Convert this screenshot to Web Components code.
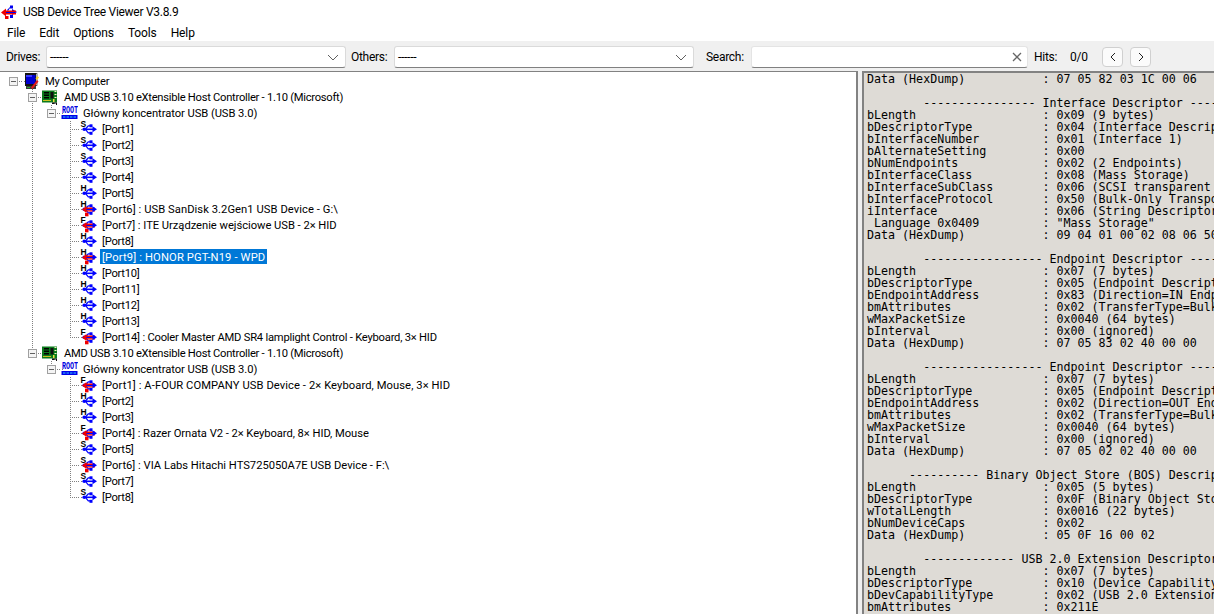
<!DOCTYPE html>
<html lang="pl">
<head>
<meta charset="utf-8">
<title>USB Device Tree Viewer</title>
<style>
  html, body { margin: 0; height: 100%; overflow: hidden; background: #fff; }
  body { font: 12px Roboto, "Noto Sans", sans-serif; color: #000; }
</style>
</head>
<body>
<usb-app></usb-app>

<script>
const UI_FONT = 'Roboto, "Noto Sans", sans-serif';

class UsbIcon extends HTMLElement {
    connectedCallback() {
        const letter = this.getAttribute('speed');
        const active = this.hasAttribute('active');
        const root = this.attachShadow({mode: 'open'});
        // blue trident, the connected ports get the red arrow on top of it
        root.innerHTML = `
            <style>:host { display: block; width: 17px; height: 16px; } svg { display: block; overflow: visible; }</style>
            <svg width="17" height="16" viewBox="0 0 17 16">
                <text x="0.500" y="5.700" font-family="Liberation Sans" font-weight="700" font-size="8.500" letter-spacing="0" fill="#000">${letter}</text>
                <g transform="translate(0 -0.700)">
                    <g fill="#0000ff">
                        <path d="M4 8.200h9v1.600H4z"/><circle cx="4.200" cy="9" r="1.800"/>
                        <path d="M5 8.300L8 5h2v1.200H8.500L6 9.300z"/><rect x="9.500" y="4" width="3" height="3"/>
                        <path d="M6 8.800l2.500 3.200h1.500v1.200H8L5 9.500z"/><rect x="9.500" y="11.500" width="3" height="3"/>
                    </g>
                    ${active ? `<g fill="#f00000">
                        <path d="M5 7.300h10v1.300H5zM5 9.900h10v1.300H5z"/><path d="M6.500 5.800L2 9.300l4.500 3.500z"/><rect x="5" y="12.500" width="3.500" height="3.500"/>
                    </g>` : ''}
                    <path d="M12.500 6l4.500 3-4.500 3z" fill="#0000ff"/>
                </g>
            </svg>`;
    }
}
customElements.define('usb-icon', UsbIcon);

class TreeIcon extends HTMLElement {
    static shapes = {
        computer: `
            <path d="M2 0h11l2 1v11l-2 1H2z" fill="#141414"/>
            <path d="M13 1h2v11h-2z" fill="#b4b4b4"/>
            <rect x="3" y="2" width="9.500" height="9" fill="#0000d0"/>
            <path d="M3 2h6v2H3z" fill="#3c3cff"/>
            <path d="M3 13h10v3H3z" fill="#3a3a3a"/><path d="M4 14h3v1H4z" fill="#2ea52e"/>
            <path d="M8 14.500l6-7.500 1.500 1.500-6 7.500z" fill="#e21818"/><path d="M12.500 5.500l2-2.500 1.500 1.500-2 2.500z" fill="#f0d020"/>`,
        controller: `
            <rect x="0" y="1.500" width="15" height="12" fill="#0b7a1c"/>
            <rect x="2" y="3" width="5" height="1.500" fill="#000"/><rect x="2" y="5.500" width="5" height="1.500" fill="#000"/><rect x="2" y="8" width="5" height="1.500" fill="#000"/>
            <rect x="8.500" y="3" width="3" height="6.500" fill="#101010"/>
            <path d="M12.500 2h2v1h-2zM12.500 5h2v1h-2zM12.500 8h2v1h-2z" fill="#f4f4c0"/>
            <rect x="11" y="10" width="1.500" height="3" fill="#e8e040"/>
            <path d="M10 13.500h5V16h-1v-1.500h-1.500V15H10z" fill="#111"/>
            <path d="M1 11h8v1H1z" fill="#c8c020"/>`,
        root: `
            <text transform="translate(1 7.500) scale(.64 1)" font-family="Liberation Mono" font-weight="700" font-size="10.500" letter-spacing="0" fill="#0000e0">ROOT</text>
            <rect x="0.500" y="10" width="16" height="4" fill="#0000e8"/>
            <path d="M2 11.500h2.500v1H2zM5.500 11.500H8v1H5.500zM9 11.500h2.500v1H9zM12.500 11.500H15v1h-2.500z" fill="#35c8ff"/>`
    };
    connectedCallback() {
        const root = this.attachShadow({mode: 'open'});
        root.innerHTML = `
            <style>:host { display: block; width: 17px; height: 16px; } svg { display: block; }</style>
            <svg width="17" height="16" viewBox="0 0 17 16">${TreeIcon.shapes[this.getAttribute('shape')]}</svg>`;
    }
}
customElements.define('tree-icon', TreeIcon);

class TreeRow extends HTMLElement {
    connectedCallback() {
        const lines = this.getAttribute('lines');
        const root = this.attachShadow({mode: 'open'});
        const cells = [...lines].map((c, i) => {
            const last = i === lines.length - 1;
            return `<span class="cell c-${{' ': 'none', '|': 'bar', 'T': 'tee', 'L': 'ell', '-': 'dash'}[c]}">${last && this.hasAttribute('box') ? '<i class="box"></i>' : ''}</span>`;
        }).join('');
        root.innerHTML = `
            <style>
                :host { display: flex; height: 16px; align-items: flex-start; white-space: nowrap; }
                .cell { flex: none; width: 19px; height: 16px; background-repeat: no-repeat; }
                .c-bar, .c-tee { background-image: repeating-linear-gradient(#808080 0 1px, transparent 1px 2px); background-size: 1px 100%; background-position: 9px 0; }
                .c-ell { background-image: repeating-linear-gradient(#808080 0 1px, transparent 1px 2px), repeating-linear-gradient(to right, #808080 0 1px, transparent 1px 2px); background-size: 1px 8px, 10px 1px; background-position: 9px 0, 9px 8px; }
                .c-tee { background-image: repeating-linear-gradient(#808080 0 1px, transparent 1px 2px), repeating-linear-gradient(to right, #808080 0 1px, transparent 1px 2px); background-size: 1px 100%, 10px 1px; background-position: 9px 0, 9px 8px; }
                .c-dash { background-image: repeating-linear-gradient(to right, #808080 0 1px, transparent 1px 2px); background-size: 10px 1px; background-position: 9px 8px; }
                .box { display: block; box-sizing: border-box; width: 9px; height: 9px; margin: 4px 0 0 5px; border: 1px solid #a0a0a0;
                       background: linear-gradient(#606060, #606060) center / 5px 1px no-repeat, #f4f4f4; }
                .icon { flex: none; width: 17px; margin-right: 5px;
                        background: repeating-linear-gradient(to right, transparent 0 1px, #808080 1px 2px) 0 8px / 3px 1px no-repeat; }
                .label { height: 16px; line-height: 18px; padding: 0 2px; margin-left: -2px; }
                :host([selected]) .label { background: #0078d7; color: #fff; height: 15px; line-height: 17px; }
            </style>
            ${cells}<span class="icon"><slot name="icon"></slot></span><span class="label"><slot></slot></span>`;
    }
}
customElements.define('tree-row', TreeRow);

class DeviceTree extends HTMLElement {
    constructor() {
        super();
        const root = this.attachShadow({mode: 'open'});
        root.innerHTML = `
            <style>
                :host { display: block; flex: none; width: 858px; box-sizing: border-box; background: #fff; padding: 1px 0 0 4px; font-size: 11.2px; letter-spacing: -0.27px;
                        border-top: 1px solid #828282; border-right: 2px solid #828282; overflow: hidden; }
            </style>
            <slot></slot>`;
    }
    connectedCallback() {
        const port = (lines, n, speed, text, track, selected) => {
            const row = document.createElement('tree-row');
            row.setAttribute('lines', lines);
            if (selected) row.setAttribute('selected', '');
            if (track !== undefined) row.style.letterSpacing = track + 'px';
            const icon = document.createElement('usb-icon');
            icon.slot = 'icon';
            icon.setAttribute('speed', speed);
            if (text) icon.setAttribute('active', '');
            row.append(icon, `[Port${n}]${text ? ' : ' + text : ''}`);
            this.append(row);
        };
        const node = (lines, shape, text, track) => {
            const row = document.createElement('tree-row');
            row.setAttribute('lines', lines);
            row.setAttribute('box', '');
            if (track !== undefined) row.style.letterSpacing = track + 'px';
            const icon = document.createElement('tree-icon');
            icon.slot = 'icon';
            icon.setAttribute('shape', shape);
            row.append(icon, text);
            this.append(row);
        };

        node('-', 'computer', 'My Computer');
        node(' T', 'controller', 'AMD USB 3.10 eXtensible Host Controller - 1.10 (Microsoft)');
        node(' |L', 'root', 'Główny koncentrator USB (USB 3.0)', -0.06);
        const hub1 = [
            ['S'], ['S'], ['S'], ['S'], ['H'],
            ['H', 'USB SanDisk 3.2Gen1 USB Device - G:\\', 0.06],
            ['F', 'ITE Urządzenie wejściowe USB - 2× HID', -0.03],
            ['H'],
            ['H', 'HONOR PGT-N19 - WPD', 0.14, true],
            ['H'], ['H'], ['H'], ['H'],
            ['F', 'Cooler Master AMD SR4 lamplight Control - Keyboard, 3× HID', -0.22]
        ];
        hub1.forEach(([speed, text, track, selected], i) => {
            port(' | ' + (i === hub1.length - 1 ? 'L' : 'T'), i + 1, speed, text, track, selected);
        });
        node(' L', 'controller', 'AMD USB 3.10 eXtensible Host Controller - 1.10 (Microsoft)');
        node('  L', 'root', 'Główny koncentrator USB (USB 3.0)', -0.06);
        const hub2 = [
            ['F', 'A-FOUR COMPANY USB Device - 2× Keyboard, Mouse, 3× HID', 0.08],
            ['H'], ['H'],
            ['F', 'Razer Ornata V2 - 2× Keyboard, 8× HID, Mouse', -0.05],
            ['S'],
            ['S', 'VIA Labs Hitachi HTS725050A7E USB Device - F:\\', 0],
            ['S'], ['S']
        ];
        hub2.forEach(([speed, text, track], i) => {
            port('   ' + (i === hub2.length - 1 ? 'L' : 'T'), i + 1, speed, text, track);
        });
    }
}
customElements.define('device-tree', DeviceTree);

class DescriptorPane extends HTMLElement {
    connectedCallback() {
        const root = this.attachShadow({mode: 'open'});
        const f = (k, v) => k.padEnd(25) + ': ' + v;
        const text = [
            f('Data (HexDump)', '07 05 82 03 1C 00 06'),
            '',
            '        ---------------- Interface Descriptor ----------------',
            f('bLength', '0x09 (9 bytes)'),
            f('bDescriptorType', '0x04 (Interface Descriptor)'),
            f('bInterfaceNumber', '0x01 (Interface 1)'),
            f('bAlternateSetting', '0x00'),
            f('bNumEndpoints', '0x02 (2 Endpoints)'),
            f('bInterfaceClass', '0x08 (Mass Storage)'),
            f('bInterfaceSubClass', '0x06 (SCSI transparent command set)'),
            f('bInterfaceProtocol', '0x50 (Bulk-Only Transport)'),
            f('iInterface', '0x06 (String Descriptor 6)'),
            f(' Language 0x0409', '"Mass Storage"'),
            f('Data (HexDump)', '09 04 01 00 02 08 06 50 06'),
            '',
            '        ----------------- Endpoint Descriptor -----------------',
            f('bLength', '0x07 (7 bytes)'),
            f('bDescriptorType', '0x05 (Endpoint Descriptor)'),
            f('bEndpointAddress', '0x83 (Direction=IN EndpointID=3)'),
            f('bmAttributes', '0x02 (TransferType=Bulk)'),
            f('wMaxPacketSize', '0x0040 (64 bytes)'),
            f('bInterval', '0x00 (ignored)'),
            f('Data (HexDump)', '07 05 83 02 40 00 00'),
            '',
            '        ----------------- Endpoint Descriptor -----------------',
            f('bLength', '0x07 (7 bytes)'),
            f('bDescriptorType', '0x05 (Endpoint Descriptor)'),
            f('bEndpointAddress', '0x02 (Direction=OUT EndpointID=2)'),
            f('bmAttributes', '0x02 (TransferType=Bulk)'),
            f('wMaxPacketSize', '0x0040 (64 bytes)'),
            f('bInterval', '0x00 (ignored)'),
            f('Data (HexDump)', '07 05 02 02 40 00 00'),
            '',
            '      ---------- Binary Object Store (BOS) Descriptor ----------',
            f('bLength', '0x05 (5 bytes)'),
            f('bDescriptorType', '0x0F (Binary Object Store)'),
            f('wTotalLength', '0x0016 (22 bytes)'),
            f('bNumDeviceCaps', '0x02'),
            f('Data (HexDump)', '05 0F 16 00 02'),
            '',
            '        ------------- USB 2.0 Extension Descriptor -------------',
            f('bLength', '0x07 (7 bytes)'),
            f('bDescriptorType', '0x10 (Device Capability Descriptor)'),
            f('bDevCapabilityType', '0x02 (USB 2.0 Extension)'),
            f('bmAttributes', '0x211E')
        ].join('\n');
        root.innerHTML = `
            <style>
                :host { display: block; flex: 1; min-width: 0; box-sizing: border-box; background: #dedbd6; overflow: hidden;
                        border-top: 2px solid #828282; border-left: 2px solid #828282; padding: 0 0 0 3px; }
                pre { margin: 0; font: 11.66px/12px "DejaVu Sans Mono", monospace; color: #000; }
            </style>
            <pre></pre>`;
        root.querySelector('pre').textContent = text;
    }
}
customElements.define('descriptor-pane', DescriptorPane);

class ComboBox extends HTMLElement {
    constructor() {
        super();
        this.attachShadow({mode: 'open'}).innerHTML = `
            <style>
                :host { display: flex; align-items: center; justify-content: space-between; flex: none; width: 300px; height: 22px; box-sizing: border-box;
                        background: #fff; border: 1px solid #dadada; border-bottom-color: #808080; border-radius: 3px; padding: 0 6px 0 3px; }
                svg { display: block; }
            </style>
            <slot></slot>
            <svg width="12" height="7" viewBox="0 0 12 7"><path d="M1 1l5 5 5-5" fill="none" stroke="#606060" stroke-width="1"/></svg>`;
    }
}
customElements.define('combo-box', ComboBox);

class SearchBox extends HTMLElement {
    constructor() {
        super();
        this.attachShadow({mode: 'open'}).innerHTML = `
            <style>
                :host { display: flex; align-items: center; justify-content: flex-end; flex: none; width: 277px; height: 22px; box-sizing: border-box;
                        background: #fff; border: 1px solid #e4e4e4; border-bottom-color: #808080; border-radius: 3px; padding-right: 5px; }
                svg { display: block; }
            </style>
            <svg width="10" height="10" viewBox="0 0 10 10"><path d="M1 1l8 8M9 1l-8 8" stroke="#666" stroke-width="1.300"/></svg>`;
    }
}
customElements.define('search-box', SearchBox);

class NavButton extends HTMLElement {
    constructor() {
        super();
        this.attachShadow({mode: 'open'}).innerHTML = `
            <style>
                :host { display: flex; align-items: center; justify-content: center; flex: none; width: 21px; height: 20px; box-sizing: border-box;
                        background: #fbfbfb; border: 1px solid #d0d0d0; border-radius: 4px; }
                svg { display: block; }
            </style>
            <slot></slot>`;
    }
}
customElements.define('nav-button', NavButton);

class ToolBar extends HTMLElement {
    constructor() {
        super();
        this.attachShadow({mode: 'open'}).innerHTML = `
            <style>
                :host { display: flex; align-items: center; height: 30px; box-sizing: border-box; background: #f0f0f0; padding: 2px 0 0 6px; color: #000; letter-spacing: -0.28px; }
                span { flex: none; }
                .drives { width: 40px; }
                .others { width: 43px; margin-left: 5px; }
                .search { width: 45px; margin-left: 12px; }
                .hits { margin-left: 6px; width: 36px; }
                .count { width: 32px; }
                .next { margin-left: 7px; }
            </style>
            <span class="drives">Drives:</span>
            <combo-box>------</combo-box>
            <span class="others">Others:</span>
            <combo-box>------</combo-box>
            <span class="search">Search:</span>
            <search-box></search-box>
            <span class="hits">Hits:</span>
            <span class="count">0/0</span>
            <nav-button><svg width="8" height="10" viewBox="0 0 8 10"><path d="M6 1L2 5l4 4" fill="none" stroke="#222"/></svg></nav-button>
            <nav-button class="next"><svg width="8" height="10" viewBox="0 0 8 10"><path d="M2 1l4 4-4 4" fill="none" stroke="#222"/></svg></nav-button>`;
    }
}
customElements.define('tool-bar', ToolBar);

class TitleBar extends HTMLElement {
    constructor() {
        super();
        this.attachShadow({mode: 'open'}).innerHTML = `
            <style>
                :host { display: flex; align-items: center; gap: 6px; height: 23px; padding-left: 1px; background: #fff; letter-spacing: -0.28px; }
                svg { display: block; flex: none; }
            </style>
            <svg width="16" height="16" viewBox="0 0 16 16">
                <g fill="#0000f0"><path d="M4 7h8v2H4z"/><path d="M11 5l5 3-5 3z"/><path d="M6 6l3-3h2v1H9L7 7z"/><rect x="9" y="1.500" width="3" height="3"/><rect x="9" y="11" width="3" height="3"/></g>
                <g fill="#f00000"><path d="M3 6.500h12V8H3zM3 9h12v1.500H3z"/><path d="M5 4.500L0 8.500l5 4z"/><rect x="4" y="12" width="3.500" height="3"/></g>
            </svg>
            <slot></slot>`;
    }
}
customElements.define('title-bar', TitleBar);

class MenuBar extends HTMLElement {
    constructor() {
        super();
        this.attachShadow({mode: 'open'}).innerHTML = `
            <style>
                :host { display: flex; align-items: center; gap: 14px; height: 18px; box-sizing: border-box; padding: 2px 0 0 7px; background: #fff; letter-spacing: -0.12px; }
            </style>
            <slot></slot>`;
    }
}
customElements.define('menu-bar', MenuBar);

class UsbApp extends HTMLElement {
    constructor() {
        super();
        this.attachShadow({mode: 'open'}).innerHTML = `
            <style>
                :host { display: flex; flex-direction: column; width: 1214px; height: 614px; overflow: hidden;
                        font: 12px ${UI_FONT}; color: #000; }
                .panes { display: flex; flex: 1; min-height: 0; gap: 4px; background: #f0f0f0; }
            </style>
            <title-bar>USB Device Tree Viewer V3.8.9</title-bar>
            <menu-bar><span>File</span><span>Edit</span><span>Options</span><span>Tools</span><span>Help</span></menu-bar>
            <tool-bar></tool-bar>
            <div class="panes">
                <device-tree></device-tree>
                <descriptor-pane></descriptor-pane>
            </div>`;
    }
}
customElements.define('usb-app', UsbApp);
</script>
</body>
</html>
